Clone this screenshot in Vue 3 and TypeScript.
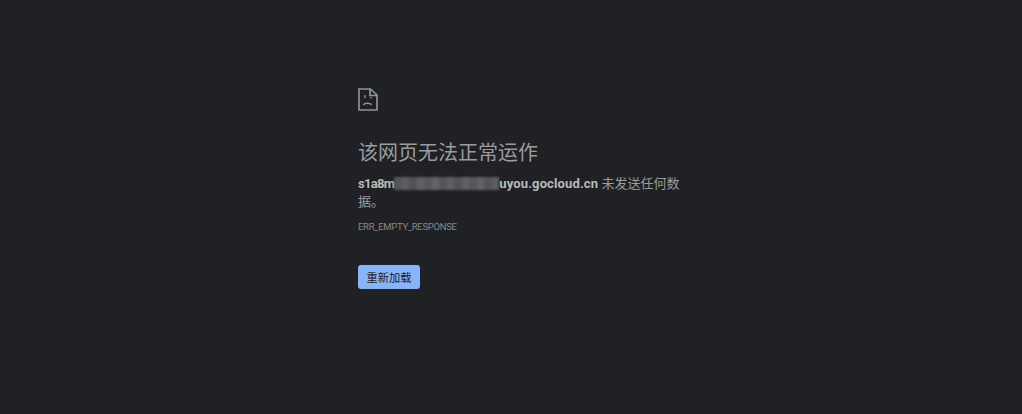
<script setup lang="ts">
const tiles: string[] = ['#55565a','#5d5e62','#525357','#606165','#57585c','#626367','#55565a','#5e5f63','#515256','#5f6064','#56575b','#606165','#535458','#5c5d61'];
</script>

<template>
  <main class="page">
    <section class="content">
      <svg class="icon" viewBox="0 0 20 23" width="20" height="23" fill="none" stroke="#8f9297" stroke-width="1.7">
        <path d="M1 1H12.5L19 7V22H1Z" />
        <path d="M12 1V7.5H19" />
        <path d="M7 7V10M13 9V10.5" stroke-width="1.4" />
        <path d="M5.5 17C6.5 14.6 12.5 14.6 13.5 17" stroke-width="1.4" />
      </svg>
      <h1 class="title">该网页无法正常运作</h1>
      <p class="message">
        <strong><span class="prefix">s1a8m</span><span class="mask"><i v-for="(c, i) in tiles" :key="i" class="tile" :style="{ background: c }"></i></span><span class="host">uyou.gocloud.cn</span></strong> 未发送任何数据。
      </p>
      <div class="code">ERR_EMPTY_RESPONSE</div>
      <button class="reload" type="button">重新加载</button>
    </section>
  </main>
</template>

<style>
html, body { margin: 0; background: #202124; }
</style>

<style scoped>
.page {
  width: 1022px;
  height: 414px;
  box-sizing: border-box;
  padding: 88px 0 0 358px;
  background: #202124;
  overflow: hidden;
  font-family: Roboto, "Noto Sans CJK SC", sans-serif;
  color: #9aa0a6;
}
.content {
  width: 332px;
  display: flex;
  flex-direction: column;
  align-items: flex-start;
}
.icon { display: block; }
.title {
  margin: 28px 0 0;
  font-size: 20px;
  line-height: 26px;
  font-weight: 400;
  color: #9a9c9f;
  font-family: "Noto Sans CJK SC", sans-serif;
}
.message {
  margin: 10px 0 0;
  font-size: 13px;
  line-height: 18px;
  color: #9a9c9f;
}
.message strong {
  font-weight: 700;
  color: #b9babc;
}
.prefix { letter-spacing: -0.7px; }
.host { letter-spacing: 0.13px; }
.mask {
  display: inline-flex;
  vertical-align: -2px;
  width: 105px;
  height: 13px;
  filter: blur(1px);
}
.tile { flex: 1; display: block; }
.code {
  margin-top: 9px;
  font-size: 9.5px;
  letter-spacing: -0.3px;
  line-height: 14px;
  color: #85878a;
}
.reload {
  margin-top: 31px;
  width: 62px;
  height: 24px;
  padding: 0;
  border: 0;
  border-radius: 3px;
  background: #8ab4f8;
  color: #202124;
  font-size: 11.25px;
  font-family: "Noto Sans CJK SC", sans-serif;
}
</style>
